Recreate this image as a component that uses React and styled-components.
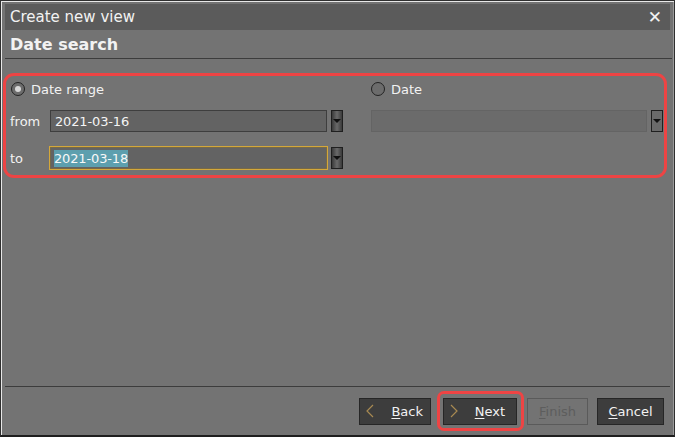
import React from "react";
import styled, { createGlobalStyle } from "styled-components";

const GlobalStyle = createGlobalStyle`
  html, body {
    margin: 0;
    padding: 0;
    background: #1e1e1e;
  }
  body {
    font-family: "DejaVu Sans", "Liberation Sans", sans-serif;
  }
`;

const Window = styled.div`
  box-sizing: border-box;
  width: 675px;
  height: 437px;
  background: #737373;
  border: 1px solid #2f2f2f;
  border-bottom: 2px solid #1e1e1e;
  box-shadow: inset 1px 1px 0 #e8e8e8, inset -1px 0 0 #9a9a9a;
  padding: 3px 4px 0 4px;
  display: flex;
  flex-direction: column;
  color: #f2f2f2;
`;

const TitleBar = styled.div`
  height: 26px;
  background: #5b5b5b;
  display: flex;
  align-items: center;
  justify-content: space-between;
  padding: 0 8px 0 5px;
  font-size: 15px;
`;

const CloseButton = styled.span`
  font-size: 17px;
  font-weight: bold;
  line-height: 1;
`;

const Header = styled.div`
  height: 27px;
  display: flex;
  align-items: center;
  padding: 1px 0 0 5px;
  font-size: 16px;
  font-weight: bold;
`;

const Rule = styled.div`
  height: 1px;
  background: #3c3c3c;
  margin-right: ${(p) => p.$right || 0}px;
`;

const Content = styled.div`
  flex: 1;
  padding-top: 14px;
`;

const Group = styled.div`
  display: grid;
  grid-template-columns: 333px 1fr;
  column-gap: 28px;
  padding: 4px 1px 10px 4px;
  margin: 0 3px 0 -2px;
  height: 105px;
  box-sizing: border-box;
  border: 3px solid #ee4444;
  border-radius: 11px;
`;

const Column = styled.div`
  display: flex;
  flex-direction: column;
`;

const RadioRow = styled.label`
  display: flex;
  align-items: center;
  gap: 6px;
  font-size: 13px;
  height: 18px;
  margin-left: ${(p) => p.$indent || 0}px;
  margin-bottom: 11px;
`;

const Radio = styled.span`
  box-sizing: border-box;
  width: 14px;
  height: 14px;
  border-radius: 50%;
  border: 1.5px solid #222;
  background: #6c6c6c;
  display: flex;
  align-items: center;
  justify-content: center;
  &::after {
    content: "";
    width: 6px;
    height: 6px;
    border-radius: 50%;
    background: ${(p) => (p.$checked ? "#d8d8d8" : "transparent")};
  }
`;

const FieldRow = styled.div`
  display: flex;
  align-items: center;
  height: 24px;
  margin-bottom: ${(p) => p.$gap || 0}px;
`;

const FieldLabel = styled.span`
  width: 40px;
  font-size: 13px;
`;

const Input = styled.div`
  box-sizing: border-box;
  flex: 1;
  height: ${(p) => (p.$focused ? 24 : 22)}px;
  margin: ${(p) => (p.$focused ? "0 -1px" : "0")};
  background: ${(p) => (p.$disabled ? "#6b6b6b" : "#636363")};
  border: 1px solid ${(p) => (p.$focused ? "#d4a83a" : p.$disabled ? "#646464" : "#3e3e3e")};
  box-shadow: ${(p) => (p.$focused ? "inset 0 0 0 0.5px #8a7030" : "none")};
  display: flex;
  align-items: center;
  padding-left: 4px;
  font-size: 13px;
  letter-spacing: -0.15px;
  color: #f4f4f4;
`;

const Selected = styled.span`
  background: #5d9fae;
  color: #f8f8f8;
  padding: 1px 0;
`;

const DropButton = styled.div`
  box-sizing: border-box;
  width: 12px;
  height: 22px;
  margin-left: 4px;
  border: 1px solid #1f1f1f;
  background: ${(p) =>
    p.$disabled ? "#6a6a6a" : "linear-gradient(90deg, #3a3a3a, #6a6a6a 50%, #3a3a3a)"};
  display: flex;
  align-items: center;
  justify-content: center;
  &::after {
    content: "";
    border-left: 4px solid transparent;
    border-right: 4px solid transparent;
    border-top: 4px solid #111;
  }
`;

const Footer = styled.div`
  height: 48px;
  display: flex;
  align-items: center;
  justify-content: flex-end;
  gap: 9px;
  padding-right: 6px;
`;

const Button = styled.button`
  position: relative;
  box-sizing: border-box;
  height: 27px;
  width: ${(p) => p.$w}px;
  background: ${(p) => (p.$disabled ? "#737373" : "#3d3d3d")};
  border: 1px solid ${(p) => (p.$disabled ? "#5a5a5a" : "#262626")};
  color: ${(p) => (p.$disabled ? "#5d5d5d" : "#f2f2f2")};
  font-family: "DejaVu Sans", "Liberation Sans", sans-serif;
  font-size: 13px;
  display: flex;
  align-items: center;
  justify-content: ${(p) => (p.$pr != null ? "space-between" : "center")};
  padding: ${(p) => (p.$pr != null ? `0 ${p.$pr}px 0 6px` : "0")};
  margin-left: ${(p) => p.$ml || 0}px;
  u {
    text-decoration: underline;
    text-underline-offset: 2px;
  }
`;

const Chevron = styled.svg`
  width: 8px;
  height: 14px;
`;

const Highlight = styled.span`
  position: absolute;
  inset: -8px -8px -7px -7px;
  border: 3px solid #ee4444;
  border-radius: 7px;
  pointer-events: none;
`;

const Arrow = ({ flip }) => (
  <Chevron viewBox="0 0 8 14">
    <path
      d={flip ? "M1 1 L7 7 L1 13" : "M7 1 L1 7 L7 13"}
      fill="none"
      stroke="#a88a52"
      strokeWidth="1.2"
    />
  </Chevron>
);

export default function App() {
  return (
    <>
      <GlobalStyle />
      <Window>
        <TitleBar>
          <span>Create new view</span>
          <CloseButton>✕</CloseButton>
        </TitleBar>
        <Header>Date search</Header>
        <Rule $right={-2} />
        <Content>
          <Group>
            <Column>
              <RadioRow $indent={1}>
                <Radio $checked />
                Date range
              </RadioRow>
              <FieldRow $gap={13}>
                <FieldLabel>from</FieldLabel>
                <Input>2021-03-16</Input>
                <DropButton />
              </FieldRow>
              <FieldRow>
                <FieldLabel>to</FieldLabel>
                <Input $focused>
                  <Selected>2021-03-18</Selected>
                </Input>
                <DropButton />
              </FieldRow>
            </Column>
            <Column>
              <RadioRow>
                <Radio />
                Date
              </RadioRow>
              <FieldRow>
                <Input $disabled />
                <DropButton $disabled />
              </FieldRow>
            </Column>
          </Group>
        </Content>
        <Rule />
        <Footer>
          <Button $w={72} $pr={7} $ml={4}>
            <Arrow />
            <span>
              <u>B</u>ack
            </span>
          </Button>
          <Button $w={74} $pr={11} $ml={3}>
            <Arrow flip />
            <span>
              <u>N</u>ext
            </span>
            <Highlight />
          </Button>
          <Button $w={61} $disabled $ml={1}>
            <span>
              <u>F</u>inish
            </span>
          </Button>
          <Button $w={67}>
            <span>
              <u>C</u>ancel
            </span>
          </Button>
        </Footer>
      </Window>
    </>
  );
}
